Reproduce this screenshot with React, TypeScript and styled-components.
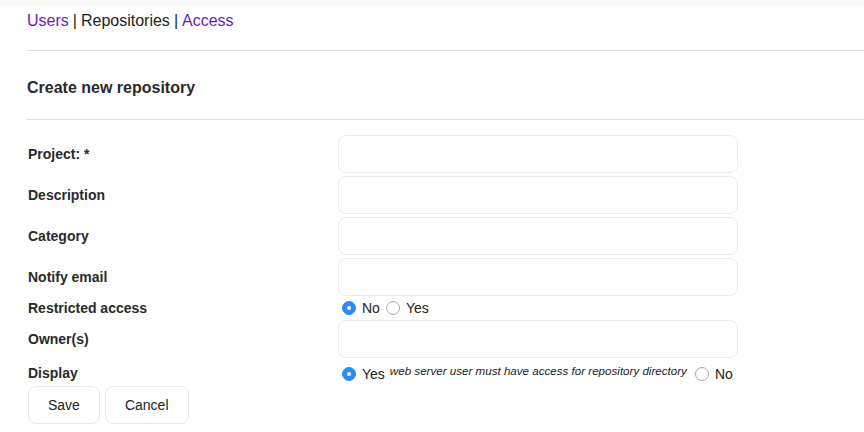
import styled, { createGlobalStyle } from 'styled-components';

const GlobalStyle = createGlobalStyle`
  body {
    margin: 0;
    background: #fff;
    font-family: 'Liberation Sans', Arial, Helvetica, sans-serif;
    color: #333;
  }
`;

const TopStrip = styled.div`
  height: 6px;
  background: #f9f9f9;
`;

const Page = styled.div`
  padding: 0 0 0 27px;
`;

const Nav = styled.nav`
  box-sizing: border-box;
  height: 44px;
  padding-bottom: 14px;
  display: flex;
  align-items: center;
  font-size: 16px;
  color: #222;

  a {
    color: #6c1bb5;
    text-decoration: none;
  }
  .sep {
    margin: 0 4px;
  }
`;

const Divider = styled.hr`
  border: 0;
  border-top: 1px solid #dcdcdc;
  margin: 0;
`;

const Title = styled.h1`
  box-sizing: border-box;
  margin: 0;
  height: 68px;
  padding-top: 6px;
  display: flex;
  align-items: center;
  font-size: 16px;
  font-weight: bold;
  color: #2a2a2a;
`;

const Form = styled.form`
  padding-top: 15px;
  display: grid;
  grid-template-columns: 311px 400px;
  row-gap: 3px;
`;

const Label = styled.label`
  display: flex;
  align-items: center;
  padding-left: 1px;
  font-size: 14px;
  font-weight: bold;
  color: #2a2a2a;
`;

const Input = styled.input`
  box-sizing: border-box;
  height: 38px;
  width: 400px;
  border: 1px solid #ebebeb;
  border-radius: 8px;
  padding: 0 10px;
  font-family: inherit;
  font-size: 14px;
  outline: none;
`;

const Choices = styled.div<{ $tall?: boolean }>`
  display: flex;
  align-items: center;
  height: ${p => (p.$tall ? '24px' : '18px')};
  padding-left: 4px;
  padding-top: ${p => (p.$tall ? '2px' : '0')};
  box-sizing: border-box;
  font-size: 14px;
  color: #222;
  white-space: nowrap;
`;

const Radio = styled.span<{ $on?: boolean }>`
  box-sizing: border-box;
  flex-shrink: 0;
  width: 14px;
  height: 14px;
  border-radius: 50%;
  margin-right: 6px;
  margin-left: ${p => (p.$on ? '0' : '6px')};
  position: relative;
  background: ${p => (p.$on ? '#2a8cf4' : '#fff')};
  border: 1px solid ${p => (p.$on ? '#2a8cf4' : '#a8a8a8')};

  &::after {
    content: '';
    display: ${p => (p.$on ? 'block' : 'none')};
    position: absolute;
    left: 4px;
    top: 4px;
    width: 4px;
    height: 4px;
    border-radius: 50%;
    background: #fff;
  }
`;

const Note = styled.em`
  font-size: 11.6px;
  color: #222;
  margin: 0 2px 0 5px;
  position: relative;
  top: -4px;
`;

const Buttons = styled.div`
  display: flex;
  gap: 5px;
  margin-top: 1px;
  padding-left: 1px;
`;

const Button = styled.button`
  box-sizing: border-box;
  height: 38px;
  padding: 0 19px;
  background: #fff;
  border: 1px solid #e8e8e8;
  border-radius: 8px;
  font-family: inherit;
  font-size: 14px;
  color: #222;
`;

export default function App() {
  return (
    <>
      <GlobalStyle />
      <TopStrip />
      <Page>
        <Nav>
          <a href="#">Users</a>
          <span className="sep">|</span>
          <span>Repositories</span>
          <span className="sep">|</span>
          <a href="#">Access</a>
        </Nav>
        <Divider />
        <Title>Create new repository</Title>
        <Divider />
        <Form onSubmit={e => e.preventDefault()}>
          <Label>Project: *</Label>
          <Input />
          <Label>Description</Label>
          <Input />
          <Label>Category</Label>
          <Input />
          <Label>Notify email</Label>
          <Input />
          <Label>Restricted access</Label>
          <Choices>
            <Radio $on />
            No
            <Radio />
            Yes
          </Choices>
          <Label>Owner(s)</Label>
          <Input />
          <Label>Display</Label>
          <Choices $tall>
            <Radio $on />
            Yes
            <Note>web server user must have access for repository directory</Note>
            <Radio />
            No
          </Choices>
        </Form>
        <Buttons>
          <Button type="button">Save</Button>
          <Button type="button">Cancel</Button>
        </Buttons>
      </Page>
    </>
  );
}
